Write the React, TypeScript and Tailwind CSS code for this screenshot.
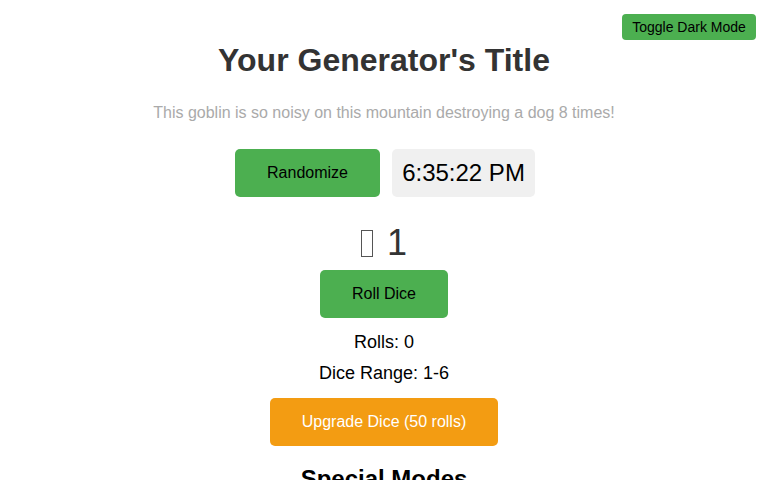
import React, { useState } from "react";

export default function App() {
    const [rolls] = useState(0);

    return (
        <div className="relative min-h-screen bg-white text-center font-['Liberation_Sans',Arial,sans-serif] pt-[42px] overflow-hidden">
            {/* Dark mode toggle */}
            <button className="absolute top-[14px] right-[12px] w-[134px] h-[26px] bg-[#4caf50] text-black text-[14px] rounded-[4px]">
                Toggle Dark Mode
            </button>

            <div className="flex flex-col items-center">
                <h1 className="text-[32px] leading-[36px] font-bold text-[#333]">Your Generator's Title</h1>

                <p className="mt-[26px] text-[16px] leading-[18px] text-[#aaa]">
                    This goblin is so noisy on this mountain destroying a dog 8 times!
                </p>

                <div className="mt-[27px] flex gap-[12px] pl-[2px]">
                    <button className="w-[145px] h-[48px] bg-[#4caf50] text-black text-[16px] rounded-[5px]">
                        Randomize
                    </button>
                    <div className="w-[143px] h-[48px] bg-[#f0f0f0] text-black text-[24px] rounded-[5px] flex items-center justify-center">
                        6:35:22 PM
                    </div>
                </div>

                {/* Dice display */}
                <div className="mt-[25px] h-[42px] flex items-center justify-center gap-[14px] text-[36px] leading-[42px] text-[#333]">
                    <span className="inline-block w-[12px] h-[27px] border border-[#555]" />
                    <span>1</span>
                </div>

                <button className="mt-[6px] w-[128px] h-[48px] bg-[#4caf50] text-black text-[16px] rounded-[5px]">
                    Roll Dice
                </button>

                <div className="mt-[14px] text-[18px] leading-[20px] text-black">Rolls: {rolls}</div>
                <div className="mt-[11px] text-[18px] leading-[20px] text-black">Dice Range: 1-6</div>

                <button className="mt-[15px] w-[228px] h-[48px] bg-[#f39c12] text-white text-[16px] rounded-[5px]">
                    Upgrade Dice (50 rolls)
                </button>

                <h2 className="mt-[19px] text-[24px] leading-[28px] font-bold text-black">Special Modes</h2>
            </div>
        </div>
    );
}
